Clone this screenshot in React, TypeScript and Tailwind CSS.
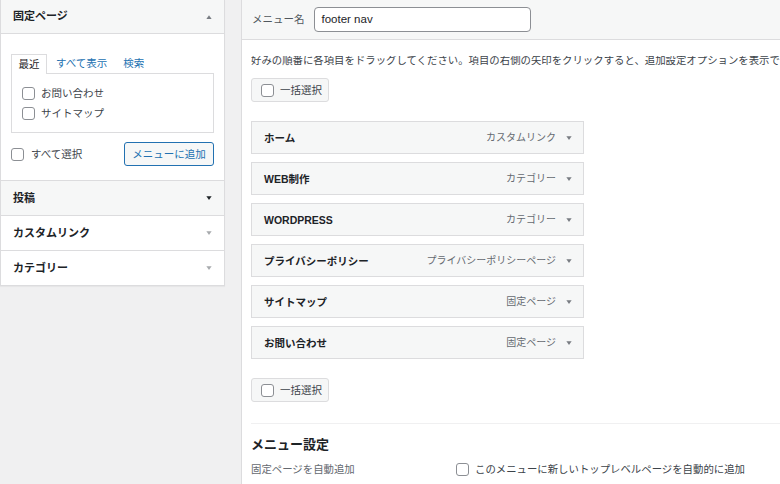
import type { ReactNode } from 'react';

const font = { fontFamily: '"Liberation Sans", "Noto Sans CJK JP", sans-serif' };

function Tri({ up = false, className = '' }: { up?: boolean; className?: string }) {
  return (
    <svg width="8" height="6" viewBox="0 0 8 6" className={className}>
      {up ? <path d="M4 0.5 L7.5 5.5 L0.5 5.5 Z" fill="currentColor" /> : <path d="M0.5 0.5 L7.5 0.5 L4 5.5 Z" fill="currentColor" />}
    </svg>
  );
}

function Box() {
  return <span className="inline-block w-[13px] h-[13px] shrink-0 rounded-[3px] border border-[#8c8f94] bg-white" />;
}

function BulkSelect() {
  return (
    <div className="w-[78px] h-[24px] flex items-center gap-[6px] pl-[9px] bg-[#f6f7f7] border border-[#dcdcde] rounded-[3px] text-[10.5px] text-[#3c434a]">
      <Box />
      一括選択
    </div>
  );
}

function Section({ title, children, gray = false }: { title: string; children: ReactNode; gray?: boolean }) {
  return (
    <div className={`h-[35px] flex items-center justify-between pl-[12px] pr-[11px] border-t border-[#dcdcde] ${gray ? 'bg-[#f6f7f7]' : 'bg-white'}`}>
      <span className="text-[11px] font-bold text-[#1d2327]">{title}</span>
      {children}
    </div>
  );
}

const items = [
  { title: 'ホーム', type: 'カスタムリンク' },
  { title: 'WEB制作', type: 'カテゴリー' },
  { title: 'WORDPRESS', type: 'カテゴリー' },
  { title: 'プライバシーポリシー', type: 'プライバシーポリシーページ' },
  { title: 'サイトマップ', type: '固定ページ' },
  { title: 'お問い合わせ', type: '固定ページ' },
];

export default function App() {
  return (
    <div className="w-[780px] h-[484px] bg-[#f0f0f1] flex overflow-hidden leading-none" style={font}>
      {/* left accordion */}
      <div className="w-[225px] self-start bg-white border-x border-b border-[#dcdcde] shadow-[0_1px_1px_rgba(0,0,0,0.04)]">
        <div className="h-[33px] bg-[#f6f7f7] flex items-center justify-between pl-[12px] pr-[11px]">
          <span className="text-[11px] font-bold text-[#1d2327]">固定ページ</span>
          <Tri up className="text-[#787c82] scale-75" />
        </div>
        <div className="border-t border-[#dcdcde] px-[10px] pt-[20px] pb-[14px]">
          <div className="flex items-end text-[10.5px]">
            <div className="w-[36px] h-[20px] -mb-px relative flex items-center justify-center bg-white border border-b-0 border-[#dcdcde] text-[#1d2327]">
              最近
            </div>
            <span className="ml-[9px] mb-[5px] text-[#2271b1]">すべて表示</span>
            <span className="ml-[16px] mb-[5px] text-[#2271b1]">検索</span>
          </div>
          <div className="h-[60px] border border-[#dcdcde] pl-[10px] pt-[13px] flex flex-col gap-[7px] text-[10.5px] text-[#3c434a]">
            <div className="flex items-center gap-[6px]">
              <Box />
              お問い合わせ
            </div>
            <div className="flex items-center gap-[6px]">
              <Box />
              サイトマップ
            </div>
          </div>
          <div className="mt-[9px] flex items-center justify-between">
            <div className="flex items-center gap-[7px] text-[10.5px] text-[#3c434a]">
              <Box />
              すべて選択
            </div>
            <div className="w-[90px] h-[24px] flex items-center justify-center rounded-[3px] border border-[#2271b1] bg-[#f6f7f7] text-[10.5px] text-[#2271b1]">
              メニューに追加
            </div>
          </div>
        </div>
        <Section title="投稿" gray>
          <Tri className="text-[#1d2327] scale-75" />
        </Section>
        <Section title="カスタムリンク">
          <Tri className="text-[#a7aaad] scale-75" />
        </Section>
        <Section title="カテゴリー">
          <Tri className="text-[#a7aaad] scale-75" />
        </Section>
      </div>

      {/* right editor */}
      <div className="ml-[16px] flex-1 min-w-0 bg-white border-l border-[#dcdcde]">
        <div className="h-[40px] bg-[#f6f7f7] border-b border-[#dcdcde] flex items-center pl-[10px]">
          <span className="text-[10.5px] text-[#50575e]">メニュー名</span>
          <div className="ml-[9px] w-[217px] h-[25px] rounded-[4px] border border-[#8c8f94] bg-white flex items-center px-[7px] text-[11.5px] text-[#1d2327]">
            footer nav
          </div>
        </div>
        <div className="pl-[9px]">
          <p className="mt-[16px] whitespace-nowrap overflow-hidden text-[10.4px] text-[#3c434a]">
            好みの順番に各項目をドラッグしてください。項目の右側の矢印をクリックすると、追加設定オプションを表示で
          </p>
          <div className="mt-[12px]">
            <BulkSelect />
          </div>
          <div className="mt-[19px] w-[333px] flex flex-col gap-[8px]">
            {items.map((it) => (
              <div key={it.title} className="h-[33px] flex items-center bg-[#f6f7f7] border border-[#dcdcde] pl-[12px] pr-[10px]">
                <span className="text-[10.5px] font-bold text-[#1d2327]">{it.title}</span>
                <span className="ml-auto text-[10px] text-[#646970]">{it.type}</span>
                <Tri className="ml-[9px] text-[#787c82] scale-75" />
              </div>
            ))}
          </div>
          <div className="mt-[19px]">
            <BulkSelect />
          </div>
          <div className="mt-[21px] border-t border-[#f0f0f1]" />
          <h3 className="mt-[14px] text-[13px] font-bold text-[#1d2327]">メニュー設定</h3>
          <div className="mt-[12px] flex items-center text-[10.4px]">
            <span className="w-[205px] text-[#646970]">固定ページを自動追加</span>
            <Box />
            <span className="ml-[6px] text-[#3c434a]">このメニューに新しいトップレベルページを自動的に追加</span>
          </div>
        </div>
      </div>
    </div>
  );
}
